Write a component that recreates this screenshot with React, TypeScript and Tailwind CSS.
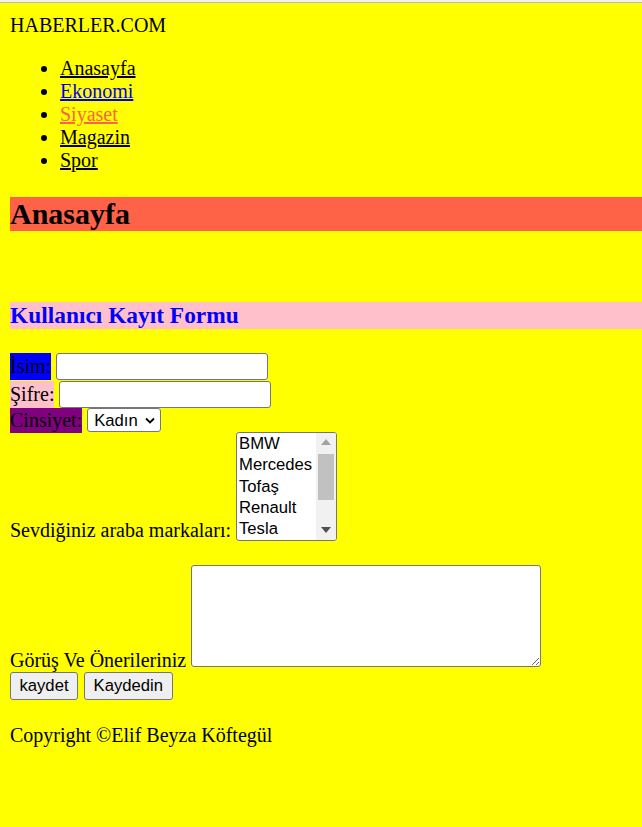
import React from 'react';

const navLinks = [
  { label: 'Anasayfa', color: 'text-black decoration-black' },
  { label: 'Ekonomi', color: 'text-[#0000ee] decoration-[#0000ee]' },
  { label: 'Siyaset', color: 'text-[#ff6347] decoration-[#ff6347]' },
  { label: 'Magazin', color: 'text-black decoration-black' },
  { label: 'Spor', color: 'text-black decoration-black' },
];

const cars = ['BMW', 'Mercedes', 'Tofaş', 'Renault', 'Tesla'];

const control = "font-['Liberation_Sans',Arial,sans-serif] text-[16.67px] text-black";

function CarList() {
  return (
    <div className="flex h-[109px] w-[101px] shrink-0 overflow-hidden rounded-[3px] border border-[#767676] bg-white">
      <div className={`flex-1 pt-[1px] ${control}`}>
        {cars.map((car) => (
          <div key={car} className="h-[21.3px] truncate pl-[2px] leading-[20px]">
            {car}
          </div>
        ))}
      </div>
      {/* scrollbar */}
      <div className="relative w-[20px] bg-[#f1f1f1]">
        <svg className="absolute left-[5px] top-[6px]" width="10" height="6" viewBox="0 0 10 6">
          <polygon points="5,0 10,6 0,6" fill="#a3a3a3" />
        </svg>
        <div className="absolute left-[2px] top-[21px] h-[46px] w-[16px] bg-[#c1c1c1]" />
        <svg className="absolute bottom-[7px] left-[5px]" width="10" height="6" viewBox="0 0 10 6">
          <polygon points="0,0 10,0 5,6" fill="#505050" />
        </svg>
      </div>
    </div>
  );
}

export default function App() {
  return (
    <div className="min-h-screen bg-[#ffff00] font-['Liberation_Serif','Times_New_Roman',serif] text-[20px] leading-[23px] text-black">
      <div className="h-[3px] border-b border-[#bdbdbd] bg-[#f0f0f0]" />
      <div className="px-[10px] pt-[11px] pb-[40px]">
        <div>HABERLER.COM</div>

        <ul className="mt-[20px] list-disc pl-[50px]">
          {navLinks.map((l) => (
            <li key={l.label}>
              <a href="#" className={`underline decoration-[1.5px] ${l.color}`}>
                {l.label}
              </a>
            </li>
          ))}
        </ul>

        <h2 className="mr-[-10px] mt-[25px] bg-[#ff6347] text-[30px] font-bold leading-[34px]">Anasayfa</h2>

        <h3 className="mr-[-10px] mt-[71px] bg-[#ffc0cb] text-[23.4px] font-bold leading-[27px] text-[#0000ff]">
          Kullanıcı Kayıt Formu
        </h3>

        <form className="mt-[24px]" onSubmit={(e) => e.preventDefault()}>
          <div className="flex h-[27.5px] items-center gap-[5px]">
            <label className="flex h-[27px] items-center bg-[#0000ff] leading-[27px]">İsim:</label>
            <input
              type="text"
              className="h-[27px] w-[212px] rounded-[3px] border border-[#767676] bg-white px-[3px] outline-none"
            />
          </div>
          <div className="flex h-[27.5px] items-center gap-[5px]">
            <label className="flex h-[27px] items-center bg-[#ffc0cb] leading-[27px]">Şifre:</label>
            <input
              type="password"
              className="h-[27px] w-[212px] rounded-[3px] border border-[#767676] bg-white px-[3px] outline-none"
            />
          </div>
          <div className="flex h-[24px] items-center gap-[5px]">
            <label className="flex h-[25px] items-center bg-[#800080] leading-[25px]">Cinsiyet:</label>
            <div
              className={`flex h-[23.5px] w-[73.5px] items-center justify-between rounded-[3px] border border-[#767676] bg-white pl-[6px] pr-[5px] ${control}`}
            >
              <span>Kadın</span>
              <svg width="10" height="7" viewBox="0 0 10 7">
                <polyline points="1,1.5 5,5.5 9,1.5" fill="none" stroke="#000" strokeWidth="1.8" />
              </svg>
            </div>
          </div>
          <div className="flex items-end gap-[5px]">
            <label className="mb-[-1px]">Sevdiğiniz araba markaları:</label>
            <CarList />
          </div>

          <div className="mt-[24px] flex items-end gap-[5px]">
            <label>Görüş Ve Önerileriniz</label>
            <textarea className="mb-[5px] h-[102px] w-[350px] resize rounded-[3px] border border-[#767676] bg-white outline-none" />
          </div>

          <div className="flex gap-[5.5px]">
            <button
              type="submit"
              className={`h-[27.5px] w-[68px] rounded-[3px] border border-[#767676] bg-[#efefef] ${control}`}
            >
              kaydet
            </button>
            <button
              type="button"
              className={`h-[27.5px] w-[89.5px] rounded-[3px] border border-[#767676] bg-[#efefef] ${control}`}
            >
              Kaydedin
            </button>
          </div>
        </form>

        <p className="mt-[24px]">Copyright ©Elif Beyza Köftegül</p>
      </div>
    </div>
  );
}
